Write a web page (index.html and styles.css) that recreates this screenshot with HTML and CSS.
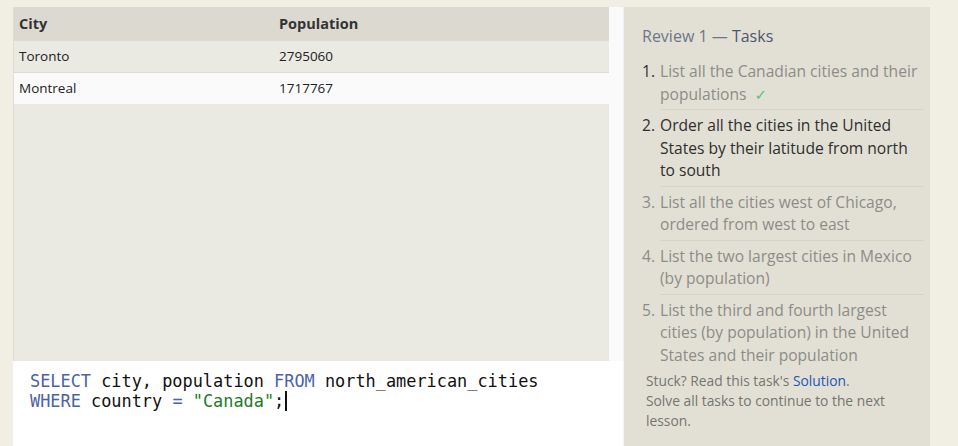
FILE: index.html
```html
<!DOCTYPE html>
<html>
<head>
<meta charset="utf-8">
<link rel="stylesheet" href="styles.css">
</head>
<body>
<div class="layout">
  <div class="left">
    <div class="results">
      <div class="table-wrap">
        <table class="data">
          <thead>
            <tr><th class="c1">City</th><th>Population</th></tr>
          </thead>
          <tbody>
            <tr class="odd"><td>Toronto</td><td>2795060</td></tr>
            <tr class="even"><td>Montreal</td><td>1717767</td></tr>
          </tbody>
        </table>
      </div>
      <div class="scroll-strip"></div>
    </div>
    <div class="editor">
      <div class="code"><span class="kw">SELECT</span> city, population <span class="kw">FROM</span> north_american_cities</div>
      <div class="code"><span class="kw">WHERE</span> country <span class="op">=</span> <span class="str">"Canada"</span>;<span class="cursor"></span></div>
    </div>
  </div>
  <div class="tasks">
    <h2 class="title">Review 1 <span class="dash">—</span> <span class="strong">Tasks</span></h2>
    <ol class="task-list">
      <li class="task done"><span class="num">1.</span><span class="txt">List all the Canadian cities and their populations <span class="check">✓</span></span></li>
      <li class="task active"><span class="num">2.</span><span class="txt">Order all the cities in the United States by their latitude from north to south</span></li>
      <li class="task"><span class="num">3.</span><span class="txt">List all the cities west of Chicago, ordered from west to east</span></li>
      <li class="task"><span class="num">4.</span><span class="txt">List the two largest cities in Mexico (by population)</span></li>
      <li class="task last"><span class="num">5.</span><span class="txt">List the third and fourth largest cities (by population) in the United States and their population</span></li>
    </ol>
    <p class="note">Stuck? Read this task's <a class="link" href="#">Solution</a>.<br>Solve all tasks to continue to the next lesson.</p>
  </div>
</div>
</body>
</html>
```
FILE: styles.css
```css
* { box-sizing: border-box; }
html, body { margin: 0; padding: 0; }
body {
  background: #f1efe4;
  font-family: "Open Sans", "Noto Sans", sans-serif;
  width: 958px;
  height: 446px;
  overflow: hidden;
}
.layout {
  display: flex;
  margin: 7px 0 0 13px;
  width: 917px;
  height: 439px;
}
.left {
  width: 611px;
  display: flex;
  flex-direction: column;
}
.results {
  height: 354px;
  display: flex;
  background: #ebeae2;
}
.table-wrap {
  width: 596px;
  border-left: 1px solid #e0ded4;
}
.scroll-strip {
  width: 15px;
  background: #fafafa;
}
.data {
  width: 100%;
  border-collapse: collapse;
  font-size: 13.5px;
  color: #222;
}
.data th {
  background: #dcdad0;
  text-align: left;
  font-weight: 700;
  font-size: 14.5px;
  color: #333;
  height: 33px;
  padding: 0 5px;
}
.data th.c1 { width: 260px; }
.data td {
  height: 32px;
  padding: 0 5px;
  border-top: 1px solid #dddbd2;
}
.data tr.odd td { background: #ebeae2; }
.data tr.even td { background: #fafafa; }
.editor {
  flex: 1;
  background: #ffffff;
  padding: 10px 0 0 17px;
  font-family: "DejaVu Sans Mono", monospace;
  font-size: 16.9px;
  line-height: 20px;
  color: #111;
}
.code { white-space: pre; }
.kw { color: #4c62a8; }
.op { color: #4c62a8; }
.str { color: #1f7a1f; }
.cursor {
  display: inline-block;
  width: 1.5px;
  height: 20px;
  background: #111;
  vertical-align: top;
  margin-left: 1px;
}
.tasks {
  width: 306px;
  background: #e2e0d5;
  padding: 18px 6px 0 18px;
  box-shadow: -1px 0 1px rgba(0,0,0,0.04);
}
.title {
  margin: 0;
  font-size: 16px;
  font-weight: 400;
  line-height: 22px;
  color: #6f7589;
}
.title .strong { color: #4f566f; }
.task-list {
  list-style: none;
  margin: 9px 0 0 0;
  padding: 0;
  font-size: 15.6px;
  line-height: 22.5px;
}
.task {
  display: flex;
  padding: 4px 0 4px 0;
  color: #8d8c87;
}
.task .txt {
  flex: 1;
  border-bottom: 1px solid #d6d4c9;
  padding-bottom: 4px;
  margin-bottom: -4px;
}
.task.last .txt { border-bottom: none; }
.num { width: 18px; flex: none; }
.task.done .num { color: #333; }
.task.active { color: #2e2e2e; }
.check {
  margin-left: 4px;
  font-family: "DejaVu Sans", sans-serif;
  font-size: 15px;
  line-height: 0;
  color: #5cc27a;
}
.note {
  margin: 1px 0 0 4px;
  font-size: 13.8px;
  line-height: 20px;
  color: #767570;
}
.link { color: #1c55b5; text-decoration: none; }
```
